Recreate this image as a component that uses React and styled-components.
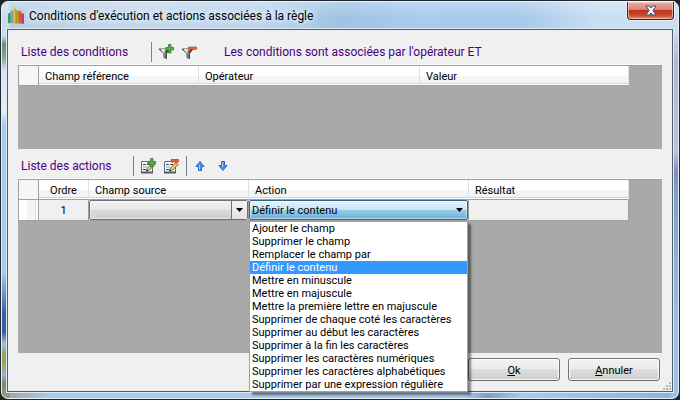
import React, { useState } from "react";
import styled, { createGlobalStyle, css } from "styled-components";

const uiFont = `Roboto, "Open Sans", sans-serif`;

const GlobalStyle = createGlobalStyle`
  *, *::before, *::after { box-sizing: border-box; }
  body { margin: 0; background: #20262c; font: 11px/13px ${uiFont}; color: #000; }
  button, select { font: inherit; color: inherit; }
`;

const Desktop = styled.main`
  display: flex;
  min-height: 100vh;
  padding: 1px;
`;

const Window = styled.section`
  flex: 1;
  display: flex;
  flex-direction: column;
  border: 1px solid #e6f1fa;
  border-radius: 7px;
  background:
    linear-gradient(180deg, #c9dcee 0, #c9dcee 34px, #5f8f76 42px, #88a694 56px, #d3e2f4 68px, #e4effb 110px, #a6c9ef 122px, #a6c9ef 270px, #3b5ba3 312px, #3b5ba3 330px, #a3bfdc 342px, #98a45e 352px, #98a45e 362px, #9ab2c5 372px, #8a8363 382px, #a3a68c 400px) left / 8px 100% no-repeat,
    linear-gradient(180deg, transparent 28px, #b9b1d8 60px, #c0bde0 150px, #8f83bb 170px, #7d9cc9 185px, #9cc0e6 330px) right / 8px 100% no-repeat,
    linear-gradient(90deg, #a3a68c 0, #a9cbee 50px, #a7cbee 68%, #7f9fc2 72%, #a7cbee 77%, #8fb3d8 100%) bottom / 100% 8px no-repeat,
    linear-gradient(90deg, #b7cfe6 0, #c3d8eb 20%, #b9d3ee 40%, #9fc3e3 50%, #a9cbee 62%, #a6c8ea 76%, #c9dff3 88%, #cadef2 100%);
`;

const TitleBar = styled.header`
  display: flex;
  align-items: center;
  height: 27px;
  padding-left: 6px;
  padding-right: 4px;
  gap: 5px;
  border-radius: 6px 6px 0 0;
  background: linear-gradient(180deg, rgba(255, 255, 255, 0.25), rgba(255, 255, 255, 0) 60%);
`;

const Title = styled.h1`
  flex: 1;
  margin: 0;
  font-size: 12px;
  line-height: 16px;
  font-weight: 400;
  text-shadow: 0 0 6px #fff, 0 0 8px #fff;
`;

const CloseButton = styled.button`
  align-self: flex-start;
  display: flex;
  align-items: center;
  justify-content: center;
  width: 47px;
  height: 18px;
  padding: 0;
  border: 1px solid #4a1a1c;
  border-top: 0;
  border-radius: 0 0 4px 4px;
  box-shadow: inset 0 0 0 1px rgba(255, 225, 215, 0.6), 0 0 0 1px rgba(255, 255, 255, 0.5);
  background: linear-gradient(180deg, #e9b0a5 0, #d8806f 48%, #b93420 50%, #c8452c 75%, #e08c62 100%);
`;

const Client = styled.div`
  flex: 1;
  display: flex;
  flex-direction: column;
  margin: 0 5px 6px;
  padding: 0 10px;
  border: 1px solid #4f5f6c;
  box-shadow: 0 0 0 1px #dcebf7;
  background: #f0f0f0;
`;

const Toolbar = styled.div`
  display: flex;
  align-items: center;
  height: ${(p) => (p.$first ? 35 : 30)}px;
  padding: ${(p) => (p.$first ? "8px" : "4px")} 3px 0;
  color: #4b0082;
`;

const Heading = styled.h2`
  width: ${(p) => (p.$wide ? 130 : 112)}px;
  margin: 0;
  font-size: 12px;
  line-height: 16px;
  font-weight: 400;
`;

const Note = styled.p`
  margin: 0 0 0 20px;
  font-size: 12px;
  line-height: 16px;
`;

const Separator = styled.span`
  width: 1px;
  height: 20px;
  margin-right: 6px;
  background: #808080;
`;

const ToolButton = styled.button`
  display: flex;
  width: 16px;
  height: 16px;
  margin-right: 7px;
  padding: 0;
  border: 0;
  background: none;
`;

const GridPane = styled.div`
  flex: ${(p) => (p.$fill ? "1 0 auto" : "0 0 84px")};
  border-top: 1px solid #a0a0a0;
  box-shadow: 0 -1px #fafafa;
  background: #a9a9a9;
`;

const Table = styled.table`
  width: 611px;
  table-layout: fixed;
  border-collapse: separate;
  border-spacing: 0;
  border-left: 1px solid #a0a0a0;
`;

const Col = styled.col`
  width: ${(p) => p.$w}px;
`;

const HeadCell = styled.th`
  height: 20px;
  padding: 1px 6px 0;
  border-right: 1px solid #e0e0e3;
  border-bottom: 1px solid #a0a0a0;
  background: linear-gradient(180deg, #fff 0, #fff 50%, #f5f6f8 52%, #f2f3f5 88%, #d5d5d5 90%, #d5d5d5 94%, #fff 95%);
  font-weight: 400;
  text-align: ${(p) => (p.$center ? "center" : "left")};
  ${(p) => p.$corner && css`
    border-right-color: #a0a0a0;
    background: #f5f6f8;
  `}
`;

const Cell = styled.td`
  height: 21px;
  padding: 0;
  border-right: 1px solid #a0a0a0;
  border-bottom: 1px solid #a0a0a0;
  background: #f0f0f0;
  text-align: center;
`;

const RowHead = styled(Cell).attrs({ as: "th" })`
  background: linear-gradient(90deg, #fff 40%, #f3f4f6 42%, #f3f4f6 84%, #d5d5d5 86%, #fff 92%);
`;

const Combo = styled.div`
  position: relative;
  display: flex;
  height: 20px;
`;

const Select = styled.select`
  flex: 1;
  min-width: 0;
  appearance: none;
  padding: 1px 18px 0 2px;
  border: 1px solid #707070;
  border-radius: 2px;
  outline: 0;
  box-shadow: inset 0 0 0 1px rgba(255, 255, 255, 0.5);
  background: linear-gradient(180deg, #f1f1f1 0, #e6e6e6 48%, #d8d8d8 52%, #cfcfcf 100%);
  ${(p) => p.$open && css`
    border-color: #2c628b;
    background: linear-gradient(180deg, #e3f3fb 0, #c9e6f5 48%, #98cbe8 52%, #6cb1dc 100%);
  `}
`;

const ComboArrow = styled.span`
  position: absolute;
  top: 1px;
  right: 1px;
  bottom: 1px;
  width: 16px;
  display: flex;
  align-items: center;
  justify-content: center;
  pointer-events: none;
  ${(p) => p.$split && css`
    border-left: 1px solid #707070;
    background: linear-gradient(180deg, #f3f3f3, #e3e3e3);
  `}
`;

const List = styled.ul`
  position: absolute;
  z-index: 2;
  top: 100%;
  left: 0;
  right: 0;
  margin: 1px 0 0;
  padding: 0;
  list-style: none;
  border: 1px solid #a0a0a0;
  background: #fff;
  box-shadow: 3px 3px 2px rgba(0, 0, 0, 0.45);
  text-align: left;
`;

const Option = styled.li`
  padding: 1px 0 0 2px;
  line-height: 12px;
  white-space: nowrap;
  color: ${(p) => (p.$selected ? "#fff" : "#000")};
  background: ${(p) => (p.$selected ? "#3399ff" : "#fff")};
`;

const Footer = styled.footer`
  position: relative;
  display: flex;
  justify-content: flex-end;
  gap: 8px;
  height: 38px;
  padding: 5px 2px 0 0;
`;

const PushButton = styled.button`
  width: 92px;
  height: 23px;
  padding: 1px 0 0;
  border: 1px solid #707070;
  border-radius: 3px;
  box-shadow: inset 0 0 0 1px rgba(255, 255, 255, 0.8);
  background: linear-gradient(180deg, #f2f2f2 0, #ebebeb 48%, #dddddd 50%, #cfcfcf 100%);
`;

const Grip = styled.svg`
  position: absolute;
  right: -9px;
  bottom: 1px;
`;

const AppIcon = () => (
  <svg width="16" height="16" viewBox="0 0 16 16" aria-hidden="true">
    <path fill="#3c9d4c" d="M0 6l1-1h1.500v9.500L0 15.500z" />
    <path fill="#5ebdd0" d="M2.500 3.500l1.500-1 1 1V15l-2.500.5z" />
    <path fill="#f2a51c" d="M5 1l1.500-1L8 1v14.500H5z" />
    <path fill="#ffd84d" d="M5.500 1h1v14h-1z" />
    <path fill="#c79c22" d="M8 3l1.500-1L11 3v12.500H8z" />
    <path fill="#e8572a" d="M11 3.500l1-1L13.500 4v11.500H11z" />
    <path fill="#d02e8b" d="M13.500 6L15 5l1 1v10l-2.500-.5z" />
    <path stroke="#26363c" strokeOpacity=".5" strokeWidth=".5" d="M2.500 4v11M5 2v13.500M8 2v13.500M11 3v12.500M13.500 5v10.500" />
  </svg>
);

const CloseGlyph = () => (
  <svg width="12" height="11" viewBox="0 0 12 11" aria-hidden="true">
    <path fill="#f7f7f7" stroke="#4b4d5f" d="M1 1h3.500L6 3l1.500-2H11L8 5.500l3 4.500H7.500L6 8l-1.500 2H1l3-4.500z" />
  </svg>
);

const Plus = () => (
  <path fill="#55b04a" stroke="#2d7a2d" strokeWidth=".8" d="M10.500.5h2.500v3h2.600v2.400H13v3h-2.500v-3H7.900V3.500h2.600z" />
);

const FilterIcon = ({ add }) => (
  <svg width="16" height="16" viewBox="0 0 16 16" aria-hidden="true">
    <defs>
      <linearGradient id="funnel">
        <stop offset="0" stopColor="#666" />
        <stop offset=".4" stopColor="#fff" />
        <stop offset=".65" stopColor="#444" />
        <stop offset="1" stopColor="#222" />
      </linearGradient>
    </defs>
    <path fill="url(#funnel)" stroke="#444" strokeWidth=".9" d="M1 5h11L8.500 9.500v5L6 13.500v-4z" />
    <path stroke="#f4f4f4" d="M3 5.800h6" />
    {add ? <Plus /> : <path fill="#f0683c" stroke="#c43a1a" strokeWidth=".7" d="M7.500 3h8v2.300h-8z" />}
  </svg>
);

const EditIcon = ({ add }) => (
  <svg width="16" height="16" viewBox="0 0 16 16" aria-hidden="true">
    <path fill="#f5f8fb" stroke="#5a6e82" d="M1.500 3.500h11v11h-11z" />
    <path fill="#4c5c6c" d="M1 13.500h12v2H1z" />
    <path stroke="#3d4b59" d="M3 6.500h3M7 6.500h3M3 11.500h3" />
    <path stroke="#8ea0b0" d="M3 9h4" />
    <path fill="#eec75a" stroke="#65501f" strokeWidth=".8" d="M6.500 13l1-3L13 4.500l2.300 2L9.500 12z" />
    <path fill="#222" d="M6 13.600l.7-2 1.400 1.200z" />
    {add ? <Plus /> : <path fill="#ef5a33" stroke="#b93317" strokeWidth=".7" d="M8 1.500h7.600v2.500H8z" />}
  </svg>
);

const ArrowIcon = ({ down }) => (
  <svg width="16" height="16" viewBox="0 0 16 16" aria-hidden="true">
    <path
      fill="#4f8df0"
      stroke="#2f62c8"
      strokeLinejoin="round"
      d={down ? "M5.500 3.500h3v4h2.500L7 12.500 3 7.500h2.500z" : "M5.500 12.500h3v-4h2.500L7 3.500 3 8.500h2.500z"}
    />
    <path stroke="#a9d0ff" d={down ? "M6.500 4v5" : "M6.500 7v5"} />
  </svg>
);

const Triangle = () => (
  <svg width="7" height="4" viewBox="0 0 7 4" aria-hidden="true">
    <path d="M0 0h7L3.500 4z" />
  </svg>
);

const ACTIONS = [
  "Ajouter le champ",
  "Supprimer le champ",
  "Remplacer le champ par",
  "Définir le contenu",
  "Mettre en minuscule",
  "Mettre en majuscule",
  "Mettre la première lettre en majuscule",
  "Supprimer de chaque coté les caractères",
  "Supprimer au début les caractères",
  "Supprimer à la fin les caractères",
  "Supprimer les caractères numériques",
  "Supprimer les caractères alphabétiques",
  "Supprimer par une expression régulière",
];

const GRIP_DOTS = [[6, 0], [3, 3], [6, 3], [0, 6], [3, 6], [6, 6]];

export default function App() {
  const [action, setAction] = useState("Définir le contenu");

  return (
    <Desktop>
      <GlobalStyle />
      <Window aria-labelledby="window-title">
        <TitleBar>
          <AppIcon />
          <Title id="window-title">Conditions d'exécution et actions associées à la règle</Title>
          <CloseButton aria-label="Fermer"><CloseGlyph /></CloseButton>
        </TitleBar>
        <Client>
          <Toolbar $first>
            <Heading $wide>Liste des conditions</Heading>
            <Separator />
            <ToolButton aria-label="Ajouter une condition"><FilterIcon add /></ToolButton>
            <ToolButton aria-label="Supprimer la condition"><FilterIcon /></ToolButton>
            <Note>Les conditions sont associées par l'opérateur ET</Note>
          </Toolbar>
          <GridPane>
            <Table aria-label="Liste des conditions">
              <colgroup><Col $w={20} /><Col $w={160} /><Col $w={221} /><Col /></colgroup>
              <thead>
                <tr>
                  <HeadCell $corner />
                  <HeadCell>Champ référence</HeadCell>
                  <HeadCell>Opérateur</HeadCell>
                  <HeadCell>Valeur</HeadCell>
                </tr>
              </thead>
            </Table>
          </GridPane>
          <Toolbar>
            <Heading>Liste des actions</Heading>
            <Separator />
            <ToolButton aria-label="Ajouter une action"><EditIcon add /></ToolButton>
            <ToolButton aria-label="Supprimer l'action"><EditIcon /></ToolButton>
            <Separator />
            <ToolButton aria-label="Monter"><ArrowIcon /></ToolButton>
            <ToolButton aria-label="Descendre"><ArrowIcon down /></ToolButton>
          </Toolbar>
          <GridPane $fill>
            <Table aria-label="Liste des actions">
              <colgroup><Col $w={20} /><Col $w={50} /><Col $w={160} /><Col $w={220} /><Col /></colgroup>
              <thead>
                <tr>
                  <HeadCell $corner />
                  <HeadCell $center>Ordre</HeadCell>
                  <HeadCell>Champ source</HeadCell>
                  <HeadCell>Action</HeadCell>
                  <HeadCell>Résultat</HeadCell>
                </tr>
              </thead>
              <tbody>
                <tr>
                  <RowHead scope="row" />
                  <Cell>1</Cell>
                  <Cell>
                    <Combo>
                      <Select aria-label="Champ source"><option /></Select>
                      <ComboArrow $split><Triangle /></ComboArrow>
                    </Combo>
                  </Cell>
                  <Cell>
                    <Combo>
                      <Select $open aria-label="Action" value={action} onChange={(e) => setAction(e.target.value)}>
                        {ACTIONS.map((a) => <option key={a}>{a}</option>)}
                      </Select>
                      <ComboArrow><Triangle /></ComboArrow>
                      <List role="listbox" aria-label="Action">
                        {ACTIONS.map((a) => (
                          <Option key={a} role="option" aria-selected={a === action} $selected={a === action} onClick={() => setAction(a)}>
                            {a}
                          </Option>
                        ))}
                      </List>
                    </Combo>
                  </Cell>
                  <Cell />
                </tr>
              </tbody>
            </Table>
          </GridPane>
          <Footer>
            <PushButton><u>O</u>k</PushButton>
            <PushButton><u>A</u>nnuler</PushButton>
            <Grip width="8" height="8" viewBox="0 0 8 8" aria-hidden="true">
              {GRIP_DOTS.map(([x, y]) => <rect key={`${x}-${y}`} x={x} y={y} width="2" height="2" fill="#b8b8b8" />)}
            </Grip>
          </Footer>
        </Client>
      </Window>
    </Desktop>
  );
}
